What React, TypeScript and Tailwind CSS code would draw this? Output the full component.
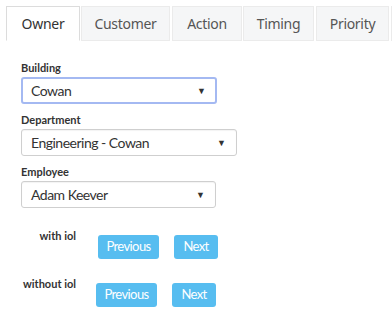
import React, { useState } from 'react';

const tabs = [
  { name: 'Owner', cls: 'w-[74px]' },
  { name: 'Customer', cls: 'w-[89px] ml-[1px]' },
  { name: 'Action', cls: 'w-[70px] ml-[2px]' },
  { name: 'Timing', cls: 'w-[71px] ml-[1px]' },
  { name: 'Priority', cls: 'w-[73px] ml-[2px]' },
];

function Select({ value, width, focused }: { value: string; width: string; focused?: boolean }) {
  return (
    <div
      className={`${width} h-[27px] flex items-center justify-between rounded-[3px] bg-white ${
        focused
          ? 'border-2 border-[#a4b9f2] pl-[8px] pr-[9px]'
          : 'border border-[#cfcfcf] pl-[9px] pr-[10px] shadow-[inset_0_1px_1px_rgba(0,0,0,0.05)]'
      }`}
    >
      <span className="text-[14px] tracking-[-0.5px] text-[#333] leading-none">{value}</span>
      <span className="text-[9px] text-[#333] leading-none">▼</span>
    </div>
  );
}

function Pager({ label, rowCls, btnCls }: { label: string; rowCls: string; btnCls: string }) {
  return (
    <div className={`flex items-start ${rowCls}`}>
      <div className="w-[76px] text-right text-[11px] font-bold text-[#333] leading-none">{label}</div>
      <div className={`flex gap-[15px] mt-[5px] ${btnCls}`}>
        <button className="w-[61px] h-[24px] rounded-[3px] bg-[#57bdf0] text-white text-[13px] tracking-[-0.6px]">Previous</button>
        <button className="w-[44px] h-[24px] rounded-[3px] bg-[#57bdf0] text-white text-[13px] tracking-[-0.6px]">Next</button>
      </div>
    </div>
  );
}

export default function App() {
  const [active, setActive] = useState(0);

  return (
    <div className="w-[392px] h-[324px] bg-white overflow-hidden font-['Lato',sans-serif]">
      {/* Tabs */}
      <div className="flex pl-[6px] pt-[6px]">
        {tabs.map((t, i) => (
          <button
            key={t.name}
            onClick={() => setActive(i)}
            className={`${t.cls} shrink-0 h-[35px] flex items-center justify-center border text-[14px] tracking-[-0.3px] font-['Noto_Sans',sans-serif] ${
              i === active
                ? 'bg-white border-[#dcdcdc] border-b-white text-[#333]'
                : 'bg-[#f5f6f7] border-[#ebebeb] text-[#555]'
            }`}
          >
            {t.name}
          </button>
        ))}
        <div className="w-[20px] shrink-0 h-[35px] ml-[2px] border border-[#ebebeb] bg-[#f5f6f7]" />
      </div>

      {/* Form */}
      <div className="px-[21px] pt-[21px]">
        <label className="block text-[11px] font-bold text-[#333] leading-none mb-[4px]">Building</label>
        <Select value="Cowan" width="w-[196px]" focused />

        <label className="block text-[11px] font-bold text-[#333] leading-none mt-[10px] mb-[4px]">Department</label>
        <Select value="Engineering - Cowan" width="w-[216px]" />

        <label className="block text-[11px] font-bold text-[#333] leading-none mt-[10px] mb-[4px]">Employee</label>
        <Select value="Adam Keever" width="w-[195px]" />
      </div>

      {/* Paging buttons */}
      <Pager label="with iol" rowCls="mt-[22px]" btnCls="ml-[22px]" />
      <Pager label="without iol" rowCls="mt-[19px]" btnCls="ml-[20px]" />
    </div>
  );
}
